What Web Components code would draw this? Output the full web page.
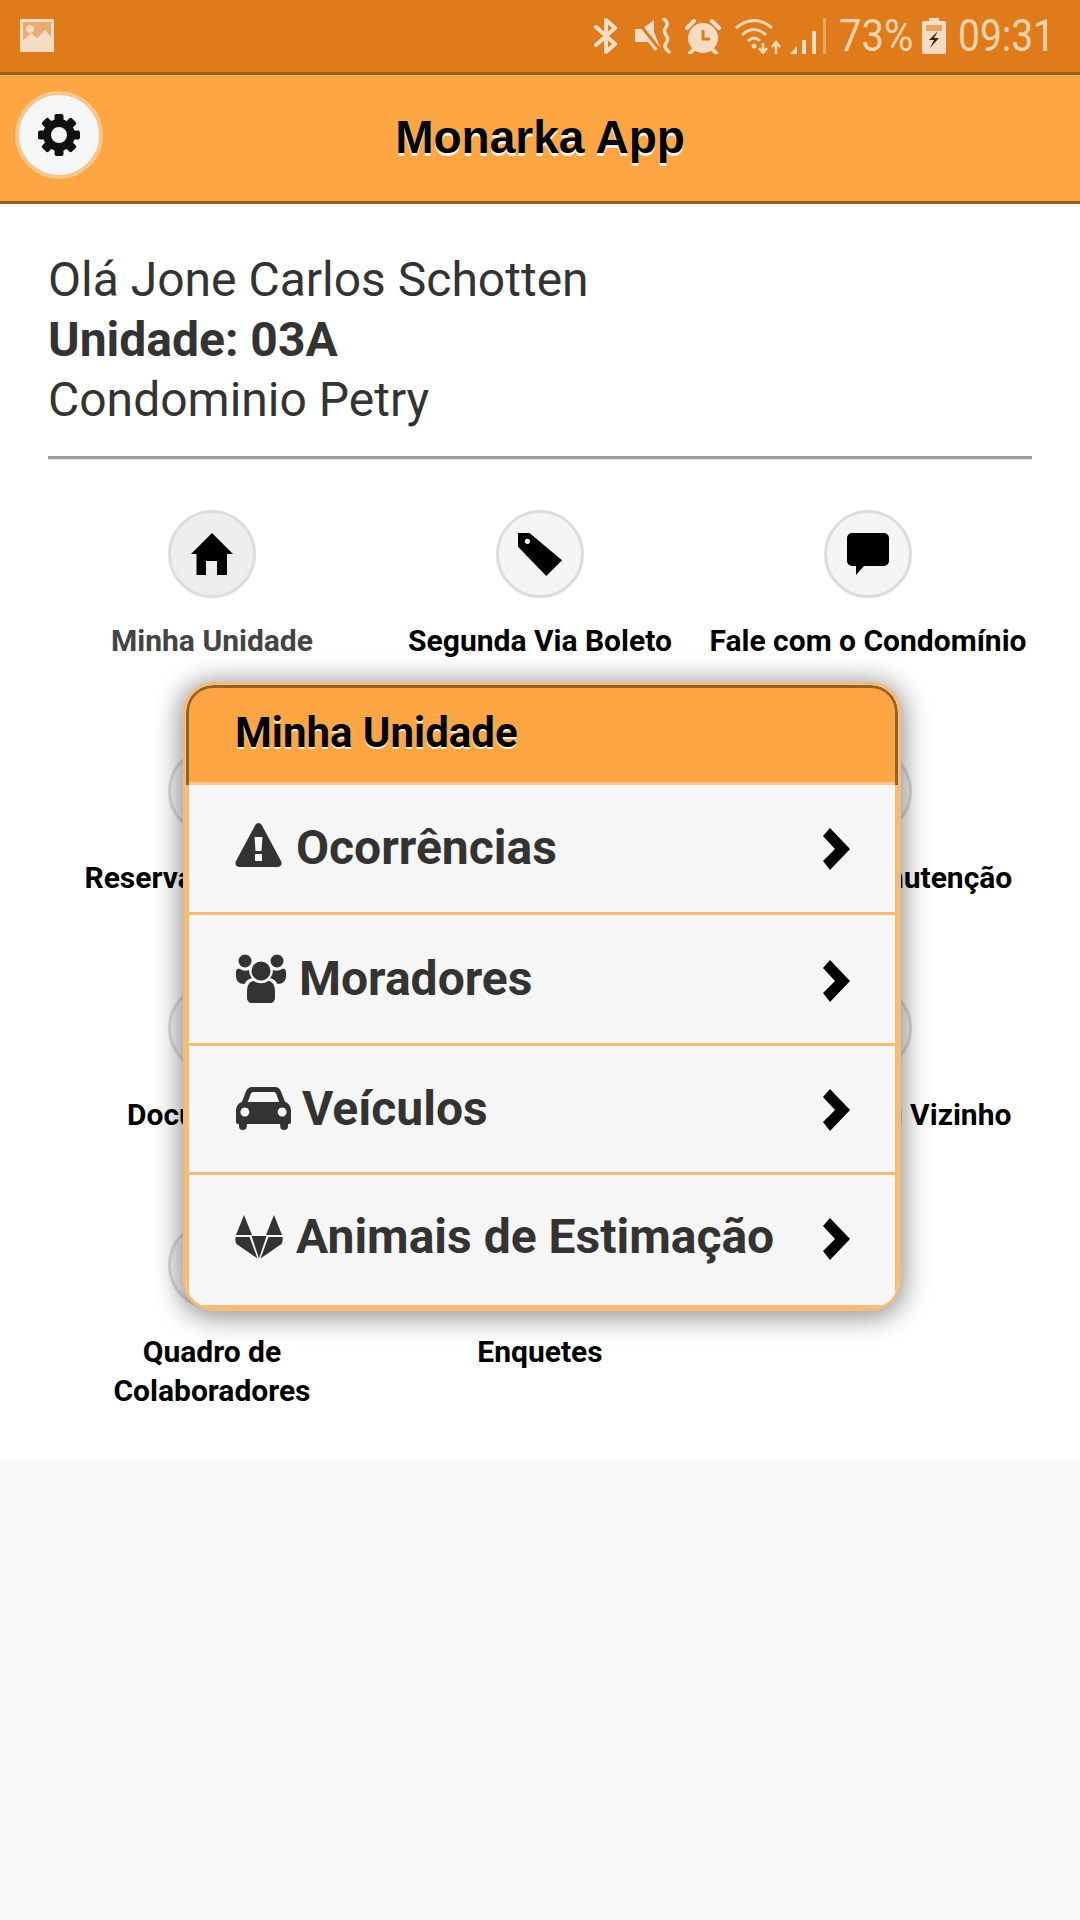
<!DOCTYPE html>
<html lang="pt"><head><meta charset="utf-8"><title>Monarka App</title>
<style>
html,body{margin:0;padding:0;background:#f9f9f9;font-family:Roboto,"Liberation Sans",sans-serif;}
body{width:1080px;height:1920px;overflow:hidden;position:relative;}
</style></head><body>
<status-bar></status-bar>
<app-header title="Monarka App"></app-header>
<main-panel>
  <user-info name="Olá Jone Carlos Schotten" unit="Unidade: 03A" place="Condominio Petry"></user-info>
  <menu-grid>
    <menu-item icon="home" active>Minha Unidade</menu-item>
    <menu-item icon="tag">Segunda Via Boleto</menu-item>
    <menu-item icon="chat">Fale com o Condomínio</menu-item>
    <menu-item icon="none">Reserva de Espaço</menu-item>
    <menu-item icon="none"></menu-item>
    <menu-item icon="none">Ficha de Manutenção</menu-item>
    <menu-item icon="none">Documentos</menu-item>
    <menu-item icon="none"></menu-item>
    <menu-item icon="none">Fale com seu Vizinho</menu-item>
    <menu-item icon="none">Quadro de Colaboradores</menu-item>
    <menu-item icon="none">Enquetes</menu-item>
  </menu-grid>
</main-panel>
<modal-menu title="Minha Unidade">
  <modal-row icon="warn" h="127" nudge="2" lift="7" gap="14" chev="0">Ocorrências</modal-row>
  <modal-row icon="users" h="128" nudge="0" lift="2" gap="12" chev="-4">Moradores</modal-row>
  <modal-row icon="car" h="126" nudge="1" lift="2" gap="11" chev="-2">Veículos</modal-row>
  <modal-row icon="fox" h="130" nudge="6" lift="7" gap="13" chev="2">Animais de Estimação</modal-row>
</modal-menu>
<script>
const ICONS={
 home:`<svg width="42" height="42" viewBox="0 0 42 42"><path d="M21 0L42 21H36V42H26V28H15V42H5.500V21H0Z"/></svg>`,
 tag:`<svg width="44" height="44" viewBox="0 0 42 42"><path fill-rule="evenodd" d="M0 1H11L42 27L27 42L0 14ZM9 6.500a2.500 2.500 0 1 0 .01 0Z"/></svg>`,
 chat:`<svg width="42" height="42" viewBox="0 0 42 42"><path d="M5 0H37a5 5 0 0 1 5 5V28a5 5 0 0 1-5 5H17L9 42V33H5a5 5 0 0 1-5-5V5A5 5 0 0 1 5 0Z"/></svg>`,
 none:``,
 warn:`<svg width="47" height="44" viewBox="0 0 47 44" fill="#333"><path fill-rule="evenodd" d="M23.500 0C25 0 26 1 27 2.500L46 38C47.500 41 46 44 43 44H4C1 44 -.5 41 1 38L20 2.500C21 1 22 0 23.500 0ZM19.500 14L20.500 28H26.500L27.500 14ZM20 31V38H27V31Z"/></svg>`,
 users:`<svg width="52" height="49" viewBox="0 0 52 49" fill="#333"><circle cx="10" cy="7" r="6.500"/><circle cx="42" cy="7" r="6.500"/><circle cx="26" cy="17" r="9.500"/><path d="M1 18C1 15 3 14 5 15C8 17 11 17 14 16C14 19 15 22 17 24C13 25 11 27 9.500 30C4 30 0 27 1 18Z"/><path d="M51 18C51 15 49 14 47 15C44 17 41 17 38 16C38 19 37 22 35 24C39 25 41 27 42.500 30C48 30 52 27 51 18Z"/><path d="M19 27C23 30 29 30 33 27C38 27 40 32 40 38V43C40 47 38 49 35 49H17C14 49 12 47 12 43V38C12 32 14 27 19 27Z"/></svg>`,
 car:`<svg style="margin-left:1px" width="55" height="43" viewBox="0 0 56 43" preserveAspectRatio="none" fill="#333"><path fill-rule="evenodd" d="M17 0H39C43 0 45 2 46 5L50 15C54 16 56 20 56 24V35C56 36 55 37 54 37H53V39C53 42 51 43 49 43C47 43 45 42 45 39V37H11V39C11 42 9 43 7 43C5 43 3 42 3 39V37H2C1 37 0 36 0 35V24C0 20 2 16 6 15L10 5C11 2 13 0 17 0ZM17.500 5C16 5 15.300 6 15 7L12 15H44L41 7C40.700 6 40 5 38.500 5ZM9 20.500a4.500 4.500 0 1 0 .01 0ZM47 20.500a4.500 4.500 0 1 0 .01 0Z"/></svg>`,
 fox:`<svg width="48" height="44" viewBox="0 0 48 44" fill="#333"><path d="M9 0L17 20H1Z"/><path d="M39 0L47 20H31Z"/><path d="M16.500 21H31.500L24 43.500Z"/><path d="M.5 22H14.500L22.500 43.500L1.500 29Q0 27 .5 22Z"/><path d="M47.500 22H33.500L25.500 43.500L46.500 29Q48 27 47.500 22Z"/></svg>`
};
function def(name,render,sheet){
  customElements.define(name,class extends HTMLElement{
    connectedCallback(){
      if(this.shadowRoot)return;
      const r=this.attachShadow({mode:'open'});
      r.innerHTML=`<style>${sheet}</style>`+render(this);
    }
  });
}
def('status-bar',()=>`
<svg class="pic" width="34" height="33" viewBox="0 0 34 33"><rect width="34" height="33" rx="1.500" fill="#e9ab72"/><path fill-rule="evenodd" fill="#f6dcc2" d="M1 0H33a1 1 0 0 1 1 1V32a1 1 0 0 1-1 1H1a1 1 0 0 1-1-1V1A1 1 0 0 1 1 0ZM3 3V21L11 14L17 19L25 11L31 18V3ZM10 6a4 4 0 1 0 .01 0Z"/></svg>
<span class="sp"></span>
<svg style="margin-right:17px" width="24" height="38" viewBox="0 0 24 38" fill="none" stroke="#f6dcc2" stroke-width="4" stroke-linecap="round" stroke-linejoin="round"><path d="M2 10L21 27L12 35V3L21 11L2 28"/></svg>
<svg style="margin-right:12px" width="38" height="36" viewBox="0 0 38 36" fill="#f6dcc2"><path d="M0 11H7L19 2V14L25 29L20 33L13 24H0Z"/><path d="M2 3L26 33" stroke="#e07b1c" stroke-width="3"/><path d="M29 1Q34 5 31 9T31 17T31 25T34 34" fill="none" stroke="#f6dcc2" stroke-width="3.500" stroke-linecap="round"/></svg>
<svg style="margin-right:13px" width="36" height="36" viewBox="0 0 36 36"><circle cx="18" cy="20" r="15" fill="#f6dcc2"/><path d="M18 12V21H25" fill="none" stroke="#e07b1c" stroke-width="3"/><path d="M2 10L9 3M34 10L27 3M8 32L5 35M28 32L31 35" stroke="#f6dcc2" stroke-width="4" stroke-linecap="round"/></svg>
<svg style="margin-right:7px" width="49" height="36" viewBox="0 0 49 36" fill="none" stroke="#f8d9b6" stroke-width="3"><path d="M2 10Q20 -5 38 10"/><path d="M8 17Q20 6 32 17"/><path d="M14 23Q20 17 26 23"/><circle cx="20" cy="28" r="2.500" fill="#f8d9b6" stroke="none"/><path d="M29 25V35M25 30L29 35L33 30M42 36V24M38 29L42 24L46 29" stroke-width="2.500"/></svg>
<svg style="margin-right:13px" width="36" height="36" viewBox="0 0 36 36"><path d="M0 36L7 28V36Z" fill="#f6dcc2"/><path d="M12 22H16V36H12Z" fill="#f6dcc2"/><path d="M22 13H26V36H22Z" fill="#f6dcc2"/><path d="M33 0H36V36H33Z" fill="#eda765"/></svg>
<span class="tx" style="width:70px;margin-right:13px"><b style="transform:scaleX(.91)">73%</b></span>
<svg style="margin-right:12px" width="24" height="36" viewBox="0 0 24 36"><path fill="#f6dcc2" d="M7 0H17V3H22a2 2 0 0 1 2 2V34a2 2 0 0 1-2 2H2a2 2 0 0 1-2-2V5A2 2 0 0 1 2 3H7Z"/><path fill="#e9a55e" d="M4 7H20V13H4Z"/><path fill="#3a2410" d="M16 13L7 22H12L8 30L17 20H12Z"/></svg>
<span class="tx" style="width:94px;margin-right:28px"><b style="transform:scaleX(.885)">09:31</b></span>
`,`:host{display:flex;align-items:center;box-sizing:border-box;height:75px;background:#e07b1c;border-bottom:3px solid #96601f;padding-left:20px;padding-bottom:1px}
.sp{flex:1}
.tx{display:block;height:48px;position:relative;color:#f8d3ad;font:400 44px/48px Roboto,sans-serif}
.tx b{position:absolute;left:0;top:0;font-weight:400;transform-origin:0 50%;white-space:nowrap}
svg{flex:none;display:block}`);
def('app-header',h=>`
<div class="l"><button aria-label="Configurações"><svg width="42" height="42" viewBox="-21 -21 42 42">${[0,45,90,135,180,225,270,315].map(a=>`<rect x="-4.500" y="-21" width="9" height="10" rx="2" transform="rotate(${a})"/>`).join('')}<circle r="12" fill="none" stroke="#111" stroke-width="8"/></svg></button></div>
<h1>${h.getAttribute('title')}</h1><span></span>
`,`:host{display:grid;grid-template-columns:1fr auto 1fr;align-items:center;box-sizing:border-box;height:129px;background:#ffa644;border-bottom:3px solid #8f6227;padding-bottom:6px}
.l{padding-left:15px}
button{width:88px;height:88px;box-sizing:border-box;border-radius:50%;background:#f5f6f8;border:4px solid #f8c68c;padding:0;display:flex;align-items:center;justify-content:center}
svg{fill:#111;display:block}
h1{margin:4px 0 0;font:700 46px/56px "Liberation Sans",Arial,sans-serif;color:#000;text-shadow:0 3px 0 rgba(255,255,255,.85);white-space:nowrap}`);
def('main-panel',()=>`<slot></slot>`,`:host{display:block;background:#fff;height:1257px;box-sizing:border-box;padding:46px 48px 0}`);
def('user-info',h=>`
<div>${h.getAttribute('name')}</div><div class="b">${h.getAttribute('unit')}</div><div>${h.getAttribute('place')}</div><hr>
`,`:host{display:block;color:#333;font:400 48px/60px Roboto,sans-serif}
.b{font-weight:700}
hr{margin:26px 0 0;height:3px;border:0;background:#9b9b9b;box-shadow:0 1px 1px rgba(0,0,0,.12)}`);
def('menu-grid',()=>`<slot></slot>`,`:host{display:grid;grid-template-columns:repeat(3,1fr);grid-auto-rows:151px;row-gap:86px;margin-top:51px}`);
def('menu-item',h=>`
<div class="c${h.hasAttribute('active')?' on':''}">${ICONS[h.getAttribute('icon')]||''}</div>
<div class="l${h.hasAttribute('active')?' on':''}"><slot></slot></div>
`,`:host{display:flex;flex-direction:column;align-items:center;gap:24px;min-width:0}
.c{width:88px;height:88px;flex:none;box-sizing:border-box;border-radius:50%;background:#f5f5f5;border:3px solid #ddd;display:flex;align-items:center;justify-content:center;box-shadow:0 1px 1px rgba(0,0,0,.06)}
.c.on{background:#eee}
.l{font:700 30px/38.500px Roboto,sans-serif;color:#000;text-align:center;width:327px}
.l.on{color:#444}
svg{display:block;fill:#000}`);
def('modal-menu',h=>`
<header><span>${h.getAttribute('title')}</span></header><slot></slot>
`,`:host{position:absolute;left:183px;top:682px;width:718px;box-sizing:border-box;border:3px solid #f6bb77;border-radius:30px;background:#f6f6f6;box-shadow:0 3px 26px 4px rgba(0,0,0,.42);overflow:hidden;display:block}
header{box-sizing:border-box;height:100px;background:#ffa644;border:3px solid #92622a;border-bottom:0;border-radius:27px 27px 0 0;padding:0 0 0 46px;display:flex;align-items:center;box-shadow:inset 0 -3px 0 #ffc487}
span{font:700 42px/50px Roboto,sans-serif;color:#000;text-shadow:0 2px 0 rgba(255,255,255,.85);position:relative;top:-4px}`);
def('modal-row',h=>`
<div class="i" style="margin-right:${h.getAttribute('gap')}px;padding-bottom:${h.getAttribute('lift')}px">${ICONS[h.getAttribute('icon')]}</div>
<div class="t" style="padding-bottom:${h.getAttribute('nudge')}px"><slot></slot></div>
<svg class="ch" style="margin-top:${Math.max(0,-h.getAttribute('chev'))}px;margin-bottom:${Math.max(0,+h.getAttribute('chev'))}px" width="27" height="42" viewBox="0 0 27 42"><path d="M0 8L7 0L27 21L7 42L0 33L12 21Z" fill="#000"/></svg>
`,`:host{display:flex;align-items:center;background:#f6f6f6;border:solid #f6bb77;border-width:0 3px 3px;padding:0 45px 0 46px;color:#333;font:700 48px/56px Roboto,sans-serif}
.i{flex:none;display:block}
.i svg{display:block}
.t{flex:1;white-space:nowrap}
.ch{flex:none;display:block}`);
document.querySelectorAll('modal-row').forEach(r=>r.style.height=r.getAttribute('h')+'px');
</script>
</body></html>
